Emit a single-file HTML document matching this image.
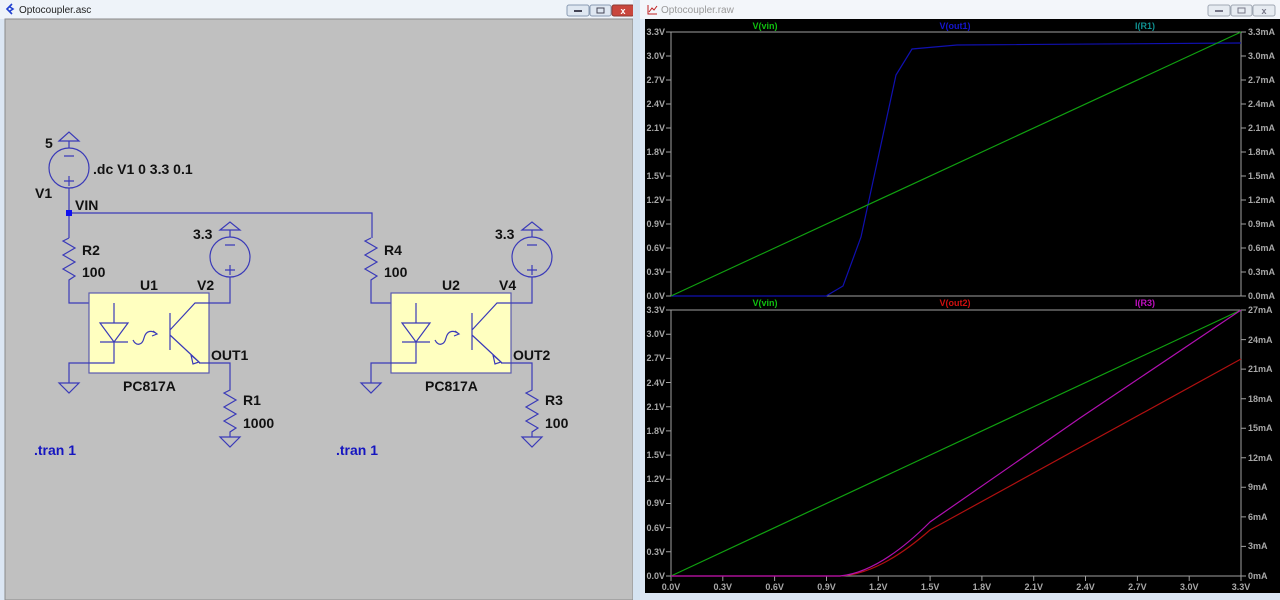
<!DOCTYPE html>
<html><head><meta charset="utf-8"><style>
html,body{margin:0;padding:0;width:1280px;height:600px;overflow:hidden;background:#dfe9f5;}
svg{display:block}
</style></head><body>
<svg width="1280" height="600" xmlns="http://www.w3.org/2000/svg" font-family="Liberation Sans, sans-serif">
<rect x="0" y="0" width="636" height="600" fill="#dbe6f3"/>
<rect x="0" y="0" width="636" height="19" fill="#eef3f9"/>
<text x="19" y="13" font-size="10" fill="#222">Optocoupler.asc</text>
<path d="M12 4 L7 9 L12 14 M10 7 L13 9 L10 11" stroke="#2040d0" stroke-width="1.6" fill="none"/>
<rect x="567" y="5" width="22" height="11" rx="2" fill="#dfe7f1" stroke="#8a9bb2"/>
<rect x="590" y="5" width="21" height="11" rx="2" fill="#dfe7f1" stroke="#8a9bb2"/>
<rect x="612" y="5" width="22" height="11" rx="2" fill="#c9463d" stroke="#8a3a33"/>
<rect x="574" y="10" width="8" height="2" fill="#445"/>
<rect x="597" y="8" width="7" height="5" fill="none" stroke="#445"/>
<text x="623" y="14" font-size="9" fill="#fff" text-anchor="middle" font-weight="bold">x</text>
<rect x="5" y="19" width="628" height="581" fill="#c0c0c0" stroke="#8a8a8a"/>
<rect x="633" y="0" width="7" height="600" fill="#d5e3f1"/>

<g stroke="#3a3ab8" stroke-width="1.2" fill="none">
<path d="M59 141 L69 132 L79 141 Z M69 141 L69 148"/>
<circle cx="69" cy="168" r="20"/>
<path d="M64 156 H74 M64 181 H74 M69 176 V186 M69 188 V238"/>
<path d="M69 213 H372 V238"/>
<g id="c1">
<path d="M69 238 L63 241 L75 248 L63 255 L75 262 L63 269 L75 276 L69 280 V303 H114"/>
<rect x="89" y="293" width="120" height="80" fill="#ffffc0" stroke="#5a5ab0"/>
<path d="M114 303 V323 M100 323 H128 L114 342 Z M100 342 H128 M114 342 V363 H69 V383 M59 383 H79 L69 393 Z"/>
<path d="M133 340 C136 346 142 346 144 338 C146 330 152 330 157 334 M153 331 L157 334 L152 336"/>
<path d="M170 313 V350 M170 330 L195 303 H230 V277 M170 335 L199 362 M191 355 L199 362 L193 364 Z M199 363 H230 V390 L224 393 L236 400 L224 407 L236 414 L224 421 L236 428 L230 432 V437 M220 437 H240 L230 447 Z"/>
<path d="M220 230 L230 222 L240 230 Z M230 230 V237"/>
<circle cx="230" cy="257" r="20"/>
<path d="M225 245 H235 M225 270 H235 M230 265 V275"/>
</g>
<use href="#c1" transform="translate(302,0)"/>
</g>
<rect x="66" y="210" width="6" height="6" fill="#1010f0"/>
<g font-size="14" font-weight="bold" fill="#111">
<text x="45" y="148">5</text>
<text x="93" y="174">.dc V1 0 3.3 0.1</text>
<text x="35" y="198">V1</text>
<text x="75" y="210">VIN</text>
<text x="82" y="255">R2</text><text x="82" y="277">100</text>
<text x="140" y="290">U1</text><text x="197" y="290">V2</text>
<text x="193" y="239">3.3</text>
<text x="211" y="360">OUT1</text>
<text x="123" y="391">PC817A</text>
<text x="243" y="405">R1</text><text x="243" y="428">1000</text>
<text x="384" y="255">R4</text><text x="384" y="277">100</text>
<text x="442" y="290">U2</text><text x="499" y="290">V4</text>
<text x="495" y="239">3.3</text>
<text x="513" y="360">OUT2</text>
<text x="425" y="391">PC817A</text>
<text x="545" y="405">R3</text><text x="545" y="428">100</text>
</g>
<g font-size="14" font-weight="bold" fill="#1515c0">
<text x="34" y="455">.tran 1</text><text x="336" y="455">.tran 1</text>
</g>

<rect x="640" y="0" width="640" height="600" fill="#dbe6f3"/>
<rect x="640" y="0" width="640" height="19" fill="#f3f6fa"/>
<path d="M648 5 V14 H657 M649 12 L652 8 L654 10 L657 6" stroke="#c02020" fill="none"/>
<text x="661" y="13" font-size="10" fill="#999">Optocoupler.raw</text>
<rect x="1208" y="5" width="22" height="11" rx="2" fill="#e6ebf1" stroke="#a0a8b4"/>
<rect x="1231" y="5" width="21" height="11" rx="2" fill="#e6ebf1" stroke="#a0a8b4"/>
<rect x="1253" y="5" width="22" height="11" rx="2" fill="#e6ebf1" stroke="#a0a8b4"/>
<rect x="1215" y="10" width="8" height="2" fill="#778"/>
<rect x="1238" y="8" width="7" height="5" fill="none" stroke="#778"/>
<text x="1264" y="14" font-size="9" fill="#778" text-anchor="middle" font-weight="bold">x</text>
<rect x="645" y="19" width="635" height="574" fill="#000"/>

<g stroke="#a0a0a0" stroke-width="1" fill="none">
<path d="M671 32 V296 H1241 V32 H671"/>
<path d="M671 310 V576 H1241 V310 H671"/>
<path d="M666 32h5M666 56h5M666 80h5M666 104h5M666 128h5M666 152h5M666 176h5M666 200h5M666 224h5M666 248h5M666 272h5M666 296h5"/>
<path d="M1241 32h5M1241 56h5M1241 80h5M1241 104h5M1241 128h5M1241 152h5M1241 176h5M1241 200h5M1241 224h5M1241 248h5M1241 272h5M1241 296h5"/>
<path d="M666 310h5M666 334.2h5M666 358.4h5M666 382.5h5M666 406.7h5M666 430.9h5M666 455.1h5M666 479.3h5M666 503.5h5M666 527.6h5M666 551.8h5M666 576h5"/>
<path d="M1241 310h5M1241 339.6h5M1241 369.1h5M1241 398.7h5M1241 428.2h5M1241 457.8h5M1241 487.3h5M1241 516.9h5M1241 546.4h5M1241 576h5"/>
<path d="M671 576v5M722.8 576v5M774.6 576v5M826.5 576v5M878.3 576v5M930.1 576v5M981.9 576v5M1033.7 576v5M1085.5 576v5M1137.4 576v5M1189.2 576v5M1241 576v5"/>
</g>
<g font-size="9" font-weight="bold" fill="#a8a8a8" text-anchor="end">
<text x="665" y="35">3.3V</text><text x="665" y="59">3.0V</text><text x="665" y="83">2.7V</text><text x="665" y="107">2.4V</text><text x="665" y="131">2.1V</text><text x="665" y="155">1.8V</text><text x="665" y="179">1.5V</text><text x="665" y="203">1.2V</text><text x="665" y="227">0.9V</text><text x="665" y="251">0.6V</text><text x="665" y="275">0.3V</text><text x="665" y="299">0.0V</text>
<text x="665" y="313">3.3V</text><text x="665" y="337">3.0V</text><text x="665" y="361">2.7V</text><text x="665" y="386">2.4V</text><text x="665" y="410">2.1V</text><text x="665" y="434">1.8V</text><text x="665" y="458">1.5V</text><text x="665" y="482">1.2V</text><text x="665" y="506">0.9V</text><text x="665" y="531">0.6V</text><text x="665" y="555">0.3V</text><text x="665" y="579">0.0V</text>
</g>
<g font-size="9" font-weight="bold" fill="#a8a8a8">
<text x="1248" y="35">3.3mA</text><text x="1248" y="59">3.0mA</text><text x="1248" y="83">2.7mA</text><text x="1248" y="107">2.4mA</text><text x="1248" y="131">2.1mA</text><text x="1248" y="155">1.8mA</text><text x="1248" y="179">1.5mA</text><text x="1248" y="203">1.2mA</text><text x="1248" y="227">0.9mA</text><text x="1248" y="251">0.6mA</text><text x="1248" y="275">0.3mA</text><text x="1248" y="299">0.0mA</text>
<text x="1248" y="313">27mA</text><text x="1248" y="343">24mA</text><text x="1248" y="372">21mA</text><text x="1248" y="402">18mA</text><text x="1248" y="431">15mA</text><text x="1248" y="461">12mA</text><text x="1248" y="490">9mA</text><text x="1248" y="520">6mA</text><text x="1248" y="549">3mA</text><text x="1248" y="579">0mA</text>
</g>
<g font-size="9" font-weight="bold" fill="#a8a8a8" text-anchor="middle">
<text x="671" y="590">0.0V</text><text x="722.8" y="590">0.3V</text><text x="774.6" y="590">0.6V</text><text x="826.5" y="590">0.9V</text><text x="878.3" y="590">1.2V</text><text x="930.1" y="590">1.5V</text><text x="981.9" y="590">1.8V</text><text x="1033.7" y="590">2.1V</text><text x="1085.5" y="590">2.4V</text><text x="1137.4" y="590">2.7V</text><text x="1189.2" y="590">3.0V</text><text x="1241" y="590">3.3V</text>
</g>
<g font-size="9" font-weight="bold" text-anchor="middle">
<text x="765" y="29" fill="#10c010">V(vin)</text><text x="955" y="29" fill="#1515d0">V(out1)</text><text x="1145" y="29" fill="#109090">I(R1)</text>
<text x="765" y="306" fill="#10c010">V(vin)</text><text x="955" y="306" fill="#d01010">V(out2)</text><text x="1145" y="306" fill="#c010c0">I(R3)</text>
</g>
<g fill="none" stroke-width="1.2">
<path d="M671 296 L826 296 L843 286 L861 237 L896 75 L912 49 L957 45 L1241 43" stroke="#1010b0"/>
<path d="M671 296 L1241 32" stroke="#10a010"/>
<path d="M671 576 L1241 310" stroke="#10a010"/>
<path d="M671 576 L840 576 Q880 574 930 530 L1241 359" stroke="#b01010"/>
<path d="M671 576 L840 576 Q880 572 930 522 L1080 418 L1241 310" stroke="#b010b0"/>
</g>
</svg>
</body></html>
